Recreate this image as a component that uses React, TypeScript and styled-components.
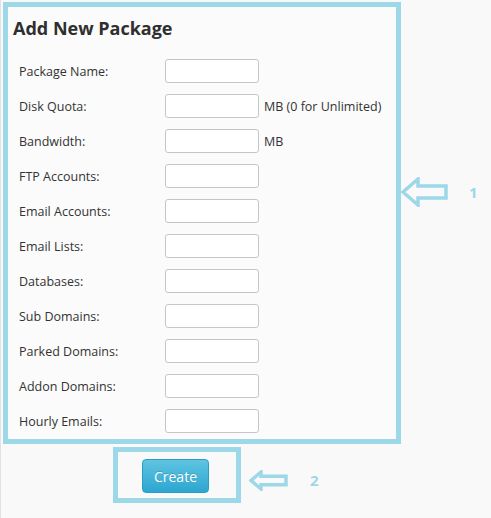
import React from "react";
import styled, { createGlobalStyle } from "styled-components";

const Global = createGlobalStyle`
  html, body { margin: 0; padding: 0; background: #f9f9f9; }
  body { font-family: "Open Sans", "Liberation Sans", sans-serif; color: #333; }
  * { box-sizing: border-box; }
`;

const ACCENT = "#9cd8e8";

const Page = styled.div`
  width: 491px;
  height: 518px;
  padding: 2px 0 0 2px;
  border-left: 1px solid #e2e2e2;
  display: flex;
  flex-direction: column;
`;

const TopRow = styled.div`
  display: flex;
  align-items: flex-start;
`;

const Panel = styled.div`
  width: 398px;
  height: 442px;
  border: 5px solid ${ACCENT};
  background: #fbfbfb;
  padding: 8px 0 0 0;
`;

const Title = styled.h2`
  margin: 0 0 17px 5px;
  font-size: 18px;
  font-weight: 700;
  line-height: 27px;
  color: #2f2f2f;
`;

const Form = styled.div`
  display: flex;
  flex-direction: column;
  gap: 11px;
  padding-left: 11px;
`;

const Row = styled.div`
  display: flex;
  align-items: center;
  height: 24px;
`;

const Label = styled.label`
  width: 146px;
  font-size: 12.5px;
  color: #333;
`;

const Input = styled.input`
  width: 94px;
  height: 24px;
  border: 1px solid #c6c6c6;
  border-radius: 3px;
  background: #fff;
  margin: 0;
`;

const Suffix = styled.span`
  margin-left: 5px;
  font-size: 12.5px;
  color: #333;
`;

const Annotation = styled.div<{ $top: number; $gap: number; $left?: number }>`
  display: flex;
  align-items: center;
  margin-top: ${(p) => p.$top}px;
  margin-left: ${(p) => p.$left ?? 0}px;
  gap: ${(p) => p.$gap}px;
`;

const Num = styled.span`
  font-size: 15px;
  font-weight: 700;
  color: ${ACCENT};
  line-height: 1;
`;

const BottomRow = styled.div`
  display: flex;
  align-items: center;
  margin: 3px 0 0 110px;
`;

const ButtonBox = styled.div`
  width: 128px;
  height: 56px;
  border: 5px solid ${ACCENT};
  display: flex;
  align-items: center;
  justify-content: center;
  padding: 2px 3px 0 0;
`;

const Button = styled.button`
  width: 67px;
  height: 34px;
  border: 1px solid #2b9cc4;
  border-radius: 4px;
  background: linear-gradient(#5fc4e1, #2da6d0);
  color: #fff;
  font-family: "Open Sans", "Liberation Sans", sans-serif;
  font-size: 14px;
  padding: 0;
  text-shadow: 0 -1px 0 rgba(0, 0, 0, 0.15);
`;

const Arrow = ({ w, h }: { w: number; h: number }) => {
  const mid = h / 2;
  const hx = Math.round(h * 0.57);
  const s1 = h * 0.3;
  const s2 = h * 0.7;
  return (
    <svg width={w} height={h} viewBox={`0 0 ${w} ${h}`}>
      <path
        d={`M2 ${mid} L${hx} 2 L${hx} ${s1} L${w - 2} ${s1} L${w - 2} ${s2} L${hx} ${s2} L${hx} ${h - 2} Z`}
        fill="none"
        stroke={ACCENT}
        strokeWidth={3.5}
        strokeLinejoin="miter"
      />
    </svg>
  );
};

const fields: { label: string; suffix?: string }[] = [
  { label: "Package Name:" },
  { label: "Disk Quota:", suffix: "MB (0 for Unlimited)" },
  { label: "Bandwidth:", suffix: "MB" },
  { label: "FTP Accounts:" },
  { label: "Email Accounts:" },
  { label: "Email Lists:" },
  { label: "Databases:" },
  { label: "Sub Domains:" },
  { label: "Parked Domains:" },
  { label: "Addon Domains:" },
  { label: "Hourly Emails:" },
];

export default function App() {
  return (
    <>
      <Global />
      <Page>
        <TopRow>
          <Panel>
            <Title>Add New Package</Title>
            <Form>
              {fields.map((f) => (
                <Row key={f.label}>
                  <Label>{f.label}</Label>
                  <Input type="text" />
                  {f.suffix && <Suffix>{f.suffix}</Suffix>}
                </Row>
              ))}
            </Form>
          </Panel>
          <Annotation $top={175} $gap={21}>
            <Arrow w={47} h={30} />
            <Num>1</Num>
          </Annotation>
        </TopRow>
        <BottomRow>
          <ButtonBox>
            <Button>Create</Button>
          </ButtonBox>
          <Annotation $top={10} $gap={22} $left={8}>
            <Arrow w={39} h={21} />
            <Num>2</Num>
          </Annotation>
        </BottomRow>
      </Page>
    </>
  );
}
